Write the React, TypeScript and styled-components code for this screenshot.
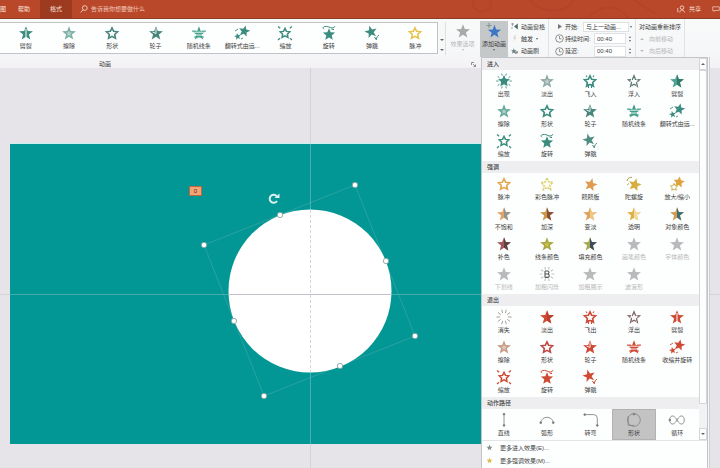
import React from "react";
import styled, { createGlobalStyle, css } from "styled-components";

const Global = createGlobalStyle`
  * { box-sizing: border-box; }
  html, body { margin: 0; padding: 0; }
  body, button, input, select {
    font-family: "Liberation Sans", "Noto Sans CJK SC", sans-serif;
    font-size: 6px;
    line-height: 8px;
    color: #3c3c3c;
  }
  button, input, select { border: 0; margin: 0; padding: 0; background: none; border-radius: 0; }
  svg { display: block; }
`;

const Page = styled.div`
  height: 100vh;
  display: flex;
  flex-direction: column;
  overflow: hidden;
  background: #e6e4e8;
`;

/* ---------- title bar ---------- */

const TitleBar = styled.header`
  position: relative;
  flex: none;
  display: flex;
  height: 19px;
  background: #b9482b;
  border-bottom: 1px solid #8f3a26;
`;

const Swirl = styled.svg`
  position: absolute;
  top: 0;
  right: 50px;
  width: 200px;
  height: 18px;
`;

const Tab = styled.button<{ $active?: boolean; $edge?: boolean }>`
  width: ${(p) => (p.$edge ? 8 : 32)}px;
  color: #fbe3da;
  text-align: ${(p) => (p.$edge ? "left" : "center")};
  background: ${(p) => (p.$active ? "#9d3a20" : "transparent")};
`;

const Search = styled.label`
  flex: 1;
  display: flex;
  align-items: center;
  gap: 3px;
  padding-left: 8px;
`;

const SearchInput = styled.input`
  width: 120px;
  color: #f3cfc2;
  outline: none;
  &::placeholder { color: #efc5b6; opacity: 1; }
`;

const Share = styled.button`
  position: relative;
  display: flex;
  align-items: center;
  gap: 4px;
  margin-right: 11px;
  color: #fbe3da;
`;

const Comments = styled.button`
  position: relative;
  display: flex;
  align-items: center;
  width: 8px;
  overflow: hidden;
`;

/* ---------- ribbon ---------- */

const Ribbon = styled.section`
  flex: none;
  display: flex;
  height: 49px;
  background: linear-gradient(#f8fafa, #f6f7f8 32px, #f3f1f4);
`;

const AnimationGroup = styled.div`
  position: relative;
  width: 480px;
  flex: none;
  display: flex;
  flex-direction: column;
  padding-top: 3px;
`;

const GroupRow = styled.div`
  display: flex;
`;

const Gallery = styled.div`
  display: flex;
  width: 438px;
  height: 32px;
  padding: 0 0 0 4px;
  background: #fcfffe;
  border: 1px solid #bfc4c8;
  border-left: 0;
`;

const GroupName = styled.div`
  width: 210px;
  padding-top: 5px;
  text-align: center;
`;

const Launcher = styled.button`
  position: absolute;
  right: 4px;
  bottom: 1px;
`;

const Spinner = styled.div<{ $wide?: boolean }>`
  display: flex;
  flex-direction: column;
  justify-content: ${(p) => (p.$wide ? "flex-end" : "center")};
  gap: ${(p) => (p.$wide ? 8 : 2)}px;
  width: ${(p) => (p.$wide ? 8 : 6)}px;
  padding-bottom: ${(p) => (p.$wide ? 4 : 0)}px;
  align-items: center;
  ${(p) => p.$wide && css`background: #f6f8f8; border-right: 1px solid #dde0e2;`}
`;

const Arrow = styled.span<{ $down?: boolean; $pale?: boolean; $big?: boolean }>`
  display: block;
  width: 0;
  height: 0;
  border: ${(p) => (p.$big ? 2 : 1)}px solid transparent;
  border-${(p) => (p.$down ? "top" : "bottom")}: 2px solid ${(p) => (p.$pale ? "#b9bbbc" : "#666")};
  border-${(p) => (p.$down ? "bottom" : "top")}-width: 0;
`;

const ArrowButton = styled.button`
  display: flex;
  align-items: center;
  justify-content: center;
`;

const LargeButton = styled.button<{ $pressed?: boolean; $off?: boolean }>`
  display: flex;
  flex-direction: column;
  align-items: center;
  justify-content: flex-start;
  width: ${(p) => (p.$off ? 33 : 28)}px;
  height: ${(p) => (p.$off ? 33 : 36)}px;
  padding-top: ${(p) => (p.$off ? 1 : 2)}px;
  gap: 1px;
  white-space: nowrap;
  color: ${(p) => (p.$off ? "#b6b8b9" : "#3c3c3c")};
  background: ${(p) => (p.$pressed ? "#c5c8c9" : "transparent")};
`;

const AddAnchor = styled.div`
  position: relative;
  flex: none;
  padding-top: 2px;
`;

const ToolColumn = styled.div<{ $width: number }>`
  flex: none;
  display: flex;
  flex-direction: column;
  gap: 1px;
  width: ${(p) => p.$width}px;
  height: 38px;
  padding: 2px 0 0 3px;
  border-right: 1px solid #e1e2e4;
`;

const ToolRow = styled.div`
  display: flex;
  align-items: center;
  gap: 1px;
  height: 12px;
  white-space: nowrap;
`;

const ToolButton = styled.button`
  display: flex;
  align-items: center;
  gap: 3px;
  height: 12px;
  white-space: nowrap;
  &:disabled { color: #b6b8b9; padding-left: 1px; gap: 5px; }
`;

const FieldLabel = styled.label<{ $wide?: boolean }>`
  width: ${(p) => (p.$wide ? 28 : 17)}px;
`;

const StartSelect = styled.select`
  appearance: none;
  width: 46px;
  height: 10px;
  padding-left: 2px;
  background: #fff;
  border: 1px solid #dfe2e4;
`;

const TimeInput = styled.input`
  width: 32px;
  height: 11px;
  padding-left: 2px;
  background: #fff;
  border: 1px solid #dfe2e4;
`;

/* ---------- effect tiles ---------- */

const Tile = styled.button<{ $selected?: boolean; $tall?: boolean; $compact?: boolean }>`
  flex: 1 1 0;
  min-width: 0;
  display: flex;
  flex-direction: column;
  align-items: center;
  justify-content: flex-start;
  gap: 1px;
  height: ${(p) => (p.$tall ? 31 : 30)}px;
  padding-top: ${(p) => (p.$compact ? 2 : 3)}px;
  white-space: nowrap;
  background: ${(p) => (p.$selected ? "#c3c3c3" : "transparent")};
  box-shadow: ${(p) => (p.$selected ? "inset 0 0 0 1px #b2b2b2" : "none")};
  &:disabled { color: #b9b9b9; }
`;

/* ---------- drop-down panel ---------- */

const Panel = styled.div`
  position: absolute;
  z-index: 2;
  top: 38px;
  left: 1px;
  width: 227px;
  background: #fdfefe;
  border: 1px solid #c2c4c8;
  box-shadow: 1px 0 0 #f6f6f8, 2px 0 0 #cfced3;
`;

const PanelBody = styled.div`
  display: flex;
`;

const Sections = styled.div`
  flex: 1;
  min-width: 0;
`;

const SectionTitle = styled.h2`
  margin: 0;
  height: 12px;
  padding: 2px 0 0 5px;
  font-size: 6px;
  line-height: 8px;
  font-weight: 500;
  color: #444;
  background: #eeeef0;
`;

const TileGrid = styled.div`
  display: grid;
  grid-template-columns: repeat(5, 1fr);
  padding-bottom: 1px;
`;

const PathRow = styled.div`
  display: flex;
`;

const ScrollBar = styled.div`
  flex: none;
  display: flex;
  flex-direction: column;
  width: 8px;
  background: #f1f2f3;
`;

const ScrollThumb = styled.div`
  flex: 1;
  margin-bottom: 24px;
  background: #fcfdfd;
  border: 1px solid #d4d6d8;
`;

const ScrollEnd = styled(ArrowButton)`
  height: 12px;
  background: #fcfdfd;
  border: 1px solid #d4d6d8;
`;

const MoreList = styled.div`
  border-top: 1px solid #e4e4e6;
  padding-bottom: 12px;
`;

const MoreButton = styled.button`
  display: flex;
  align-items: center;
  gap: 7px;
  width: 100%;
  height: 13px;
  padding-left: 4px;
  color: #444;
`;

/* ---------- slide area ---------- */

const Workspace = styled.main`
  position: relative;
  flex: 1;
  min-height: 0;
  padding: 76px 0 0 10px;
`;

const Slide = styled.div`
  position: relative;
  width: 600px;
  height: 300px;
  background: #029795;
  box-shadow: 0 -1px 0 #c9eeee;
`;

const SlideDrawing = styled.svg`
  position: absolute;
  inset: 0;
  overflow: visible;
`;

const OrderTag = styled.div`
  position: absolute;
  left: 179px;
  top: 42px;
  width: 13px;
  height: 10px;
  text-align: center;
  color: #5b2410;
  background: #f2a477;
  border: 1px solid #b9683f;
`;

/* ---------- icons ---------- */

type Look =
  | "solid" | "outline" | "half" | "burst" | "rays" | "rise" | "float" | "wheel"
  | "lines" | "double" | "zoom" | "spin" | "bounce" | "fade" | "glow" | "tilt"
  | "grow" | "bold" | "split";

const starPath = (cx: number, cy: number, r: number, inner = 0.42, turn = 0) =>
  Array.from({ length: 10 }, (_, i) => {
    const a = ((i * 36 - 90 + turn) * Math.PI) / 180;
    const d = i % 2 ? r * inner : r;
    return `${i ? "L" : "M"}${(cx + d * Math.cos(a)).toFixed(2)} ${(cy + d * Math.sin(a)).toFixed(2)}`;
  }).join("") + "Z";

const rays = (from: number, to: number, n: number) =>
  Array.from({ length: n }, (_, i) => {
    const a = (((i + 0.5) * 360) / n - 90) * (Math.PI / 180);
    const c = Math.cos(a);
    const s = Math.sin(a);
    return `M${(8 + from * c).toFixed(2)} ${(8 + from * s).toFixed(2)}L${(8 + to * c).toFixed(2)} ${(8 + to * s).toFixed(2)}`;
  }).join("");

function Star({ look, color, second = "#fff", size = 16 }: { look: Look; color: string; second?: string; size?: number }) {
  const full = starPath(8, 8.6, 7.3);
  const ring = <path d={starPath(8, 8.6, 5.8, 0.48)} fill="#fff" stroke={color} strokeWidth="1.6" />;
  const solid = <path d={full} fill={color} />;
  const right = "M8 1.3L9.8 6.1L14.9 6.3L10.9 9.5L12.3 14.5L8 11.6Z";
  let art: React.ReactNode = solid;
  if (look === "outline") art = ring;
  if (look === "fade") art = <>{solid}<path d={starPath(8, 8.6, 3.2)} fill={second} opacity=".45" /></>;
  if (look === "half") art = <>{solid}<path d={right} fill={second} /></>;
  if (look === "split") art = <>{solid}<path d="M8 4V12" stroke="#fff" strokeWidth="1.4" opacity=".7" /></>;
  if (look === "burst") art = <><path d={starPath(8, 8.2, 6.2, 0.48)} fill={color} /><path d={rays(5.6, 7.8, 10)} stroke={color} strokeWidth=".9" /></>;
  if (look === "rays") art = <path d={rays(4, 7.6, 10)} stroke={color} strokeWidth="1" fill="none" />;
  if (look === "rise") art = <>{ring}<path d="M6.5 15V11M9.5 15V11M4 2.5L5 4M12 2.5L11 4" stroke={color} strokeWidth="1.1" /></>;
  if (look === "float") art = <path d={starPath(8, 8.6, 5.8, 0.45)} fill="#fff" stroke={color} strokeWidth="1.3" strokeDasharray="5 .9" />;
  if (look === "wheel") art = <>{solid}<path d="M8 8.5V3.5M8 8.5L4.5 7" stroke="#fff" strokeWidth=".9" /></>;
  if (look === "lines") art = <>{solid}<path d="M2 7.2H14M3 10H13" stroke="#fff" strokeWidth=".9" /><path d="M1 6H5M11 6H15M3 12H13" stroke={color} strokeWidth=".9" /></>;
  if (look === "double") art = (
    <>
      <path d={starPath(10.3, 6.2, 5.9, 0.44, 12)} fill={color} />
      <path d={starPath(3.6, 11.5, 3.6, 0.42, -12)} fill={second === "#fff" ? color : second} />
      <path d="M1 6L4 4M7 14L9 13" stroke={color} strokeWidth=".9" />
    </>
  );
  if (look === "zoom") art = (
    <>
      <path d={starPath(8, 8.4, 5, 0.5)} fill="#fff" stroke={color} strokeWidth="1.5" />
      <path d="M1 1.5L3.2 3.3M15 1.5L12.8 3.3M1 15L3 13.2M15 15L13 13.2" stroke={color} strokeWidth="1.2" />
    </>
  );
  if (look === "spin") art = (
    <>
      <path d={starPath(8, 9.6, 6.4, 0.44)} fill={color} />
      <path d="M3 4.2C0 2 5 .4 8 2.1C11 3.8 15 2.6 13.2 1M13 4.6L10.4 4" stroke={color} strokeWidth="1" fill="none" />
    </>
  );
  if (look === "bounce") art = (
    <>
      <path d={starPath(7, 7, 6.6, 0.4, -14)} fill={color} />
      <path d="M10.5 12L12.3 14.8C12.7 12 13.6 10.8 15 10.2" stroke={color} strokeWidth="1" fill="none" />
    </>
  );
  if (look === "glow") art = (
    <>
      <path d={starPath(8, 8.4, 6.2, 0.5)} fill="#fffbe0" stroke={color} strokeWidth="1.6" strokeDasharray="2 1" />
      <path d={starPath(8, 8.4, 2.6)} fill="#fff" />
    </>
  );
  if (look === "tilt") art = (
    <>
      <path d={starPath(8.8, 8.8, 6.8, 0.44, 14)} fill={color} />
      <path d="M1 5C1.5 2 4 1 6 1.4M3 7.5L1.2 9" stroke={second} strokeWidth="1" fill="none" />
    </>
  );
  if (look === "grow") art = (
    <>
      <path d={starPath(10, 6.3, 5.8, 0.48, 8)} fill={color} />
      <path d={starPath(5, 11.2, 3.8, 0.5)} fill="#fff" stroke={second} strokeWidth="1" />
    </>
  );
  if (look === "bold") art = (
    <>
      <path d={rays(4.6, 7.4, 10)} stroke={color} strokeWidth="1.2" />
      <path d="M6 5V11.5M6 5H8.6C10.4 5 10.4 8 8.4 8H6M8.6 8C10.8 8 10.8 11.4 8.6 11.4H6" stroke="#555" strokeWidth="1.1" fill="none" />
    </>
  );
  return <svg width={size} height={size} viewBox="0 0 16 16" aria-hidden="true">{art}</svg>;
}

type Effect = { name: string; look: Look; color: string; second?: string; off?: boolean };
const G = "#3b8c7e";
const R = "#cf4a35";
const N = "#b9babc";

const inGallery: Effect[] = [
  { name: "劈裂", look: "split", color: G },
  { name: "擦除", look: "fade", color: "#7dafa5" },
  { name: "形状", look: "outline", color: "#49857b" },
  { name: "轮子", look: "wheel", color: "#49857b" },
  { name: "随机线条", look: "lines", color: "#45a08c" },
  { name: "翻转式由远...", look: "double", color: G },
  { name: "缩放", look: "zoom", color: G },
  { name: "旋转", look: "spin", color: G },
  { name: "弹跳", look: "bounce", color: G },
  { name: "脉冲", look: "outline", color: "#e8c34e" },
];

const sections: { title: string; effects: Effect[] }[] = [
  {
    title: "进入",
    effects: [
      { name: "出现", look: "burst", color: G },
      { name: "淡出", look: "fade", color: "#8fa9a5" },
      { name: "飞入", look: "rise", color: G },
      { name: "浮入", look: "float", color: "#5b7772" },
      { name: "劈裂", look: "half", color: "#4ba492", second: "#35786c" },
      { name: "擦除", look: "fade", color: "#67a99b" },
      { name: "形状", look: "outline", color: G },
      { name: "轮子", look: "wheel", color: "#49857b" },
      { name: "随机线条", look: "lines", color: "#3f9c87" },
      { name: "翻转式由远...", look: "double", color: G },
      { name: "缩放", look: "zoom", color: G },
      { name: "旋转", look: "spin", color: G },
      { name: "弹跳", look: "bounce", color: "#4c8d80" },
    ],
  },
  {
    title: "强调",
    effects: [
      { name: "脉冲", look: "outline", color: "#e2a64f" },
      { name: "彩色脉冲", look: "glow", color: "#d8cf72" },
      { name: "跷跷板", look: "tilt", color: "#e09b50", second: "#fff" },
      { name: "陀螺旋", look: "tilt", color: "#d9ac3e", second: "#a89c5c" },
      { name: "放大/缩小", look: "grow", color: "#e0a13c", second: "#c9b04c" },
      { name: "不饱和", look: "half", color: "#e0a468", second: "#8f9694" },
      { name: "加深", look: "half", color: "#c99a45", second: "#8c4b3a" },
      { name: "变淡", look: "half", color: "#dfa35c", second: "#edc787" },
      { name: "透明", look: "half", color: "#e0b043", second: "#f0dca4" },
      { name: "对象颜色", look: "half", color: "#d39b51", second: "#3d6f74" },
      { name: "补色", look: "half", color: "#a4555c", second: "#5d4244" },
      { name: "线条颜色", look: "fade", color: "#a8a640", second: "#f3e552" },
      { name: "填充颜色", look: "half", color: "#a5a94f", second: "#3c4a5c" },
      { name: "画笔颜色", look: "solid", color: N, off: true },
      { name: "字体颜色", look: "solid", color: N, off: true },
      { name: "下划线", look: "solid", color: N, off: true },
      { name: "加粗闪烁", look: "bold", color: "#c3c6c8", off: true },
      { name: "加粗展示", look: "solid", color: N, off: true },
      { name: "波浪形", look: "solid", color: N, off: true },
    ],
  },
  {
    title: "退出",
    effects: [
      { name: "消失", look: "rays", color: "#a9a19c" },
      { name: "淡出", look: "half", color: R, second: "#b8402f" },
      { name: "飞出", look: "rise", color: R },
      { name: "浮出", look: "float", color: "#83686a" },
      { name: "劈裂", look: "split", color: R },
      { name: "擦除", look: "fade", color: "#c79c86" },
      { name: "形状", look: "outline", color: "#bd4944" },
      { name: "轮子", look: "wheel", color: R },
      { name: "随机线条", look: "lines", color: R },
      { name: "收缩并旋转", look: "double", color: R },
      { name: "缩放", look: "zoom", color: R },
      { name: "旋转", look: "spin", color: R },
      { name: "弹跳", look: "bounce", color: R },
    ],
  },
];

const paths: { name: string; d: string; dots: [number, number][] }[] = [
  { name: "直线", d: "M10 1V14", dots: [[10, 1.5], [10, 14]] },
  { name: "弧形", d: "M3 11C4 3 16 3 17 11", dots: [[3, 11], [17, 11]] },
  { name: "转弯", d: "M3 2H13Q17 2 17 6V14", dots: [[3, 2], [17, 14]] },
  { name: "形状", d: "M10 1A7 7 0 1 1 9.9 1M3.5 4V14H10", dots: [[10, 1.5]] },
  { name: "循环", d: "M10 8C6 1 2 3 2 8S6 15 10 8S18 3 18 8S14 15 10 8", dots: [[2, 8]] },
];

function EffectTile({ effect, compact }: { effect: Effect; compact?: boolean }) {
  return (
    <Tile disabled={effect.off} $compact={compact}>
      <Star look={effect.look} color={effect.color} second={effect.second} />
      {effect.name}
    </Tile>
  );
}

const Clock = () => (
  <svg width="9" height="9" viewBox="0 0 9 9" fill="none" stroke="#777" strokeWidth=".8" aria-hidden="true">
    <circle cx="4.5" cy="4.5" r="3.8" />
    <path d="M4.5 2V4.8H6.5" />
  </svg>
);

const handles: [number, number][] = [
  [345, 41], [194, 101], [254, 252], [405, 192], [270, 71], [376, 117], [330, 222], [224, 177],
];

function AnimationMenu() {
  return (
    <Panel>
      <PanelBody>
        <Sections>
          {sections.map((s) => (
            <section key={s.title}>
              <SectionTitle>{s.title}</SectionTitle>
              <TileGrid>
                {s.effects.map((e) => <EffectTile key={e.name} effect={e} />)}
              </TileGrid>
            </section>
          ))}
          <SectionTitle>动作路径</SectionTitle>
          <PathRow>
            {paths.map((p) => (
              <Tile key={p.name} $tall $selected={p.name === "形状"}>
                <svg width="18" height="16" viewBox="0 0 20 16" fill="none" stroke="#85888a" strokeWidth="1" aria-hidden="true">
                  <path d={p.d} />
                  {p.dots.map(([x, y]) => <circle key={`${x}-${y}`} cx={x} cy={y} r="1" fill="#666" />)}
                </svg>
                {p.name}
              </Tile>
            ))}
          </PathRow>
        </Sections>
        <ScrollBar>
          <ScrollEnd aria-label="向上滚动"><Arrow $big /></ScrollEnd>
          <ScrollThumb />
          <ScrollEnd aria-label="向下滚动"><Arrow $down $big /></ScrollEnd>
        </ScrollBar>
      </PanelBody>
      <MoreList>
        <MoreButton><Star look="solid" color="#7c8f8c" size={7} />更多进入效果(E)...</MoreButton>
        <MoreButton><Star look="solid" color="#dfb650" size={7} />更多强调效果(M)...</MoreButton>
      </MoreList>
    </Panel>
  );
}

export default function App() {
  return (
    <Page>
      <Global />
      <TitleBar>
        <Swirl viewBox="0 0 200 18" fill="none" stroke="#a63d22" strokeWidth="2" opacity=".3" aria-hidden="true">
          <circle cx="12" cy="3" r="9" />
          <path d="M60 0C72 14 96 14 104 0M118 18C130 4 150 4 158 18M164 0L186 14" />
        </Swirl>
        <Tab $edge>图</Tab>
        <Tab>帮助</Tab>
        <Tab $active>格式</Tab>
        <Search>
          <svg width="8" height="8" viewBox="0 0 8 8" fill="none" stroke="#f3cfc2" strokeWidth=".9" aria-hidden="true">
            <circle cx="4.8" cy="3" r="2.4" />
            <path d="M3.2 4.8L.6 7.4" />
          </svg>
          <SearchInput aria-label="搜索" placeholder="告诉我你想要做什么" />
        </Search>
        <Share>
          <svg width="8" height="8" viewBox="0 0 8 8" fill="none" stroke="#fbe3da" strokeWidth=".8" aria-hidden="true">
            <circle cx="5" cy="2.6" r="1.8" />
            <path d="M2.8 7.5C2.8 4.4 7.4 4.4 7.4 7.5M.8 3V7.2" />
          </svg>
          共享
        </Share>
        <Comments aria-label="批注">
          <svg width="11" height="8" viewBox="0 0 11 8" fill="none" stroke="#f3cfc2" strokeWidth="1" aria-hidden="true">
            <path d="M1 1H10V6H4L2.5 7.5V6H1Z" />
          </svg>
        </Comments>
      </TitleBar>

      <Ribbon>
        <AnimationGroup>
          <GroupRow>
            <Gallery>
              {inGallery.map((e) => <EffectTile key={e.name} effect={e} compact />)}
            </Gallery>
            <Spinner $wide>
              <ArrowButton aria-label="下一行"><Arrow $big $down /></ArrowButton>
              <ArrowButton aria-label="更多"><Arrow $big $down /></ArrowButton>
            </Spinner>
            <LargeButton $off disabled>
              <Star look="solid" color="#a6aaab" />
              效果选项
              <Arrow $down $pale />
            </LargeButton>
          </GroupRow>
          <GroupName>动画</GroupName>
          <Launcher aria-label="动画设置">
            <svg width="5" height="5" viewBox="0 0 5 5" fill="none" stroke="#777" strokeWidth=".8" aria-hidden="true">
              <path d="M.5 3V.5H3M2 2L4.5 4.5M4.5 2.5V4.5H2.5" />
            </svg>
          </Launcher>
        </AnimationGroup>

        <AddAnchor>
          <LargeButton $pressed>
            <svg width="16" height="16" viewBox="0 0 16 16" aria-hidden="true">
              <path d={starPath(8.5, 8.8, 7)} fill="#3f76c4" />
              <path d="M3 0V5M.5 2.5H5.5" stroke="#7f9a92" strokeWidth="1.1" />
            </svg>
            添加动画
            <Arrow $down />
          </LargeButton>
          <AnimationMenu />
        </AddAnchor>

        <ToolColumn $width={41}>
          <ToolButton>
            <svg width="7" height="7" viewBox="0 0 7 7" aria-hidden="true">
              <path d="M0 1H3M1.5 0V3M0 5H2" stroke="#8a9290" strokeWidth=".8" />
              <path d="M6.8 .5V6.5L3 3.5Z" fill="#4b6a70" />
            </svg>
            动画窗格
          </ToolButton>
          <ToolButton>
            <svg width="7" height="7" viewBox="0 0 7 7" aria-hidden="true"><path d="M4 0L2 3.5H4L2.5 7L5.5 2.8H3.8L5 0Z" fill="#d8d3c4" /></svg>
            触发
            <Arrow $down />
          </ToolButton>
          <ToolButton>
            <svg width="7" height="7" viewBox="0 0 7 7" aria-hidden="true">
              <path d={starPath(2.8, 3.2, 3)} fill="#60817d" />
              <path d="M3 4L7 3V5L4.5 6Z" fill="#8a8f90" />
            </svg>
            动画刷
          </ToolButton>
        </ToolColumn>

        <ToolColumn $width={87}>
          <ToolRow>
            <svg width="12" height="9" viewBox="0 0 12 9" aria-hidden="true"><path d="M6 2L10 4.5L6 7Z" fill="#777" /></svg>
            <FieldLabel htmlFor="start">开始:</FieldLabel>
            <StartSelect id="start"><option>与上一动画...</option></StartSelect>
            <Arrow $down />
          </ToolRow>
          <ToolRow>
            <svg width="2" height="2" aria-hidden="true" />
            <Clock />
            <FieldLabel htmlFor="duration" $wide>持续时间:</FieldLabel>
            <TimeInput id="duration" defaultValue="00:40" />
            <Spinner><Arrow /><Arrow $down /></Spinner>
          </ToolRow>
          <ToolRow>
            <svg width="2" height="2" aria-hidden="true" />
            <Clock />
            <FieldLabel htmlFor="delay" $wide>延迟:</FieldLabel>
            <TimeInput id="delay" defaultValue="00:40" />
            <Spinner><Arrow /><Arrow $down /></Spinner>
          </ToolRow>
        </ToolColumn>

        <ToolColumn $width={49}>
          <ToolRow>对动画重新排序</ToolRow>
          <ToolButton disabled><Arrow $big $pale />向前移动</ToolButton>
          <ToolButton disabled><Arrow $big $pale $down />向后移动</ToolButton>
        </ToolColumn>
      </Ribbon>

      <Workspace>
        <Slide>
          <SlideDrawing width="600" height="300" viewBox="0 0 600 300" fill="none">
            <path d="M345 41L194 101L254 252L405 192Z" stroke="#2ba19f" strokeWidth="1" />
            <path d="M0 150.5H600" stroke="#6fbdbb" opacity=".6" />
            <path d="M300.5 0V300" stroke="#9fcfcf" opacity=".45" />
            <path d="M-10 150.5H0M600 150.5H710M300.5 -76V0M300.5 300V324" stroke="#d2d4d9" />
            <circle cx="300" cy="147" r="81.5" fill="#fff" />
            <path d="M219 150.5H381" stroke="#c3c0c8" />
            <path d="M300.5 66V228" stroke="#d8d5da" strokeDasharray="3 2" />
            {handles.map(([x, y]) => (
              <circle key={`${x}-${y}`} cx={x} cy={y} r="2.7" fill="#fff" stroke="#7f9c9c" strokeWidth=".8" />
            ))}
            <path d="M267 52.5A4 4 0 1 0 267 57" stroke="#d9f0ef" strokeWidth="2" />
            <path d="M264.5 54H269.5V49.5Z" fill="#d9f0ef" />
          </SlideDrawing>
          <OrderTag>0</OrderTag>
        </Slide>
      </Workspace>
    </Page>
  );
}
